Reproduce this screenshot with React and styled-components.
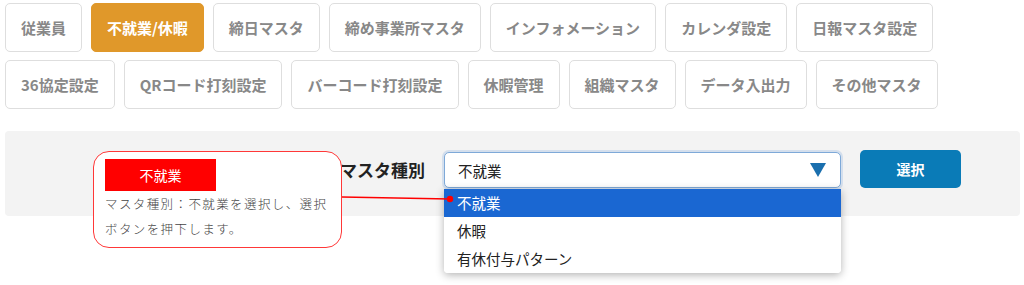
import React from 'react';
import styled, { createGlobalStyle } from 'styled-components';

const GlobalStyle = createGlobalStyle`
  html, body {
    margin: 0;
    padding: 0;
    background: #fff;
    font-family: "Noto Sans CJK JP", "Noto Sans", sans-serif;
  }
`;

const Page = styled.div`
  width: 1024px;
  height: 285px;
  overflow: hidden;
  position: relative;
`;

const TabGrid = styled.div`
  display: flex;
  flex-wrap: wrap;
  gap: 8px 9px;
  padding: 3px 5px 0;
  width: 1014px;
`;

const Tab = styled.button`
  height: 49px;
  padding: 0 15px;
  border: 1px solid ${p => (p.active ? '#e0982a' : '#dedede')};
  border-radius: 5px;
  background: ${p => (p.active ? '#e0982a' : '#fff')};
  color: ${p => (p.active ? '#fff' : '#888')};
  font-family: inherit;
  font-size: 15px;
  font-weight: 700;
  white-space: nowrap;
`;

const Stage = styled.div`
  position: relative;
  margin-top: 22px;
`;

const Panel = styled.div`
  margin: 0 4px 0 5px;
  height: 85px;
  background: #f3f3f3;
  border-radius: 4px;
  display: flex;
  align-items: flex-start;
  padding: 19px 0 0 335px;
  box-sizing: border-box;
`;

const Label = styled.span`
  font-size: 17px;
  font-weight: 700;
  color: #222;
  width: 104px;
  line-height: 40px;
`;

const SelectWrap = styled.div`
  position: relative;
  width: 397px;
  margin-top: 2px;
`;

const SelectBox = styled.div`
  height: 36px;
  box-sizing: border-box;
  border: 1px solid #7ea9d8;
  box-shadow: 0 0 0 2px rgba(120, 165, 220, 0.25);
  border-radius: 5px;
  background: #fff;
  display: flex;
  align-items: center;
  justify-content: space-between;
  padding: 0 14px 0 13px;
  font-size: 14.5px;
  color: #222;
`;

const Options = styled.ul`
  position: absolute;
  top: 37px;
  left: 0;
  right: 0;
  margin: 0;
  padding: 0;
  list-style: none;
  background: #fff;
  border-radius: 0 0 4px 4px;
  box-shadow: 0 2px 8px rgba(0, 0, 0, 0.3);
  overflow: hidden;
  z-index: 2;
`;

const Option = styled.li`
  height: 28px;
  line-height: 28px;
  padding-left: 13px;
  font-size: 14.5px;
  background: ${p => (p.selected ? '#1a67d2' : '#fff')};
  color: ${p => (p.selected ? '#fff' : '#222')};
`;

const Submit = styled.button`
  margin-left: 19px;
  width: 101px;
  height: 38px;
  border: none;
  border-radius: 5px;
  background: #0a7bb7;
  color: #fff;
  font-family: inherit;
  font-size: 14px;
  font-weight: 700;
`;

const Callout = styled.div`
  position: absolute;
  left: 93px;
  top: 20px;
  width: 249px;
  height: 97px;
  box-sizing: border-box;
  border: 1.5px solid #ff3838;
  border-radius: 16px;
  background: #fff;
  padding: 7px 0 0 11px;
  z-index: 3;
`;

const Tag = styled.div`
  width: 111px;
  height: 32px;
  background: #ff0000;
  color: #fff;
  font-size: 14px;
  display: flex;
  align-items: center;
  justify-content: center;
`;

const Note = styled.p`
  margin: 0;
  font-size: 12.5px;
  line-height: 25px;
  letter-spacing: 1.4px;
  color: #444;
  font-weight: 300;
  white-space: nowrap;
`;

const Connector = styled.svg`
  position: absolute;
  left: 0;
  top: 0;
  z-index: 4;
  pointer-events: none;
`;

const tabs = [
  '従業員', '不就業/休暇', '締日マスタ', '締め事業所マスタ', 'インフォメーション', 'カレンダ設定', '日報マスタ設定',
  '36協定設定', 'QRコード打刻設定', 'バーコード打刻設定', '休暇管理', '組織マスタ', 'データ入出力', 'その他マスタ',
];

export default function App() {
  return (
    <Page>
      <GlobalStyle />
      <TabGrid>
        {tabs.map(t => (
          <Tab key={t} active={t === '不就業/休暇'}>{t}</Tab>
        ))}
      </TabGrid>
      <Stage>
        <Panel>
          <Label>マスタ種別</Label>
          <SelectWrap>
            <SelectBox>
              <span>不就業</span>
              <svg width="16" height="14" viewBox="0 0 16 14">
                <path d="M0 0 H16 L8 14 Z" fill="#1a6fae" />
              </svg>
            </SelectBox>
            <Options>
              <Option selected>不就業</Option>
              <Option>休暇</Option>
              <Option>有休付与パターン</Option>
            </Options>
          </SelectWrap>
          <Submit>選択</Submit>
        </Panel>
        <Callout>
          <Tag>不就業</Tag>
          <Note>
            マスタ種別：不就業を選択し、選択
            <br />
            ボタンを押下します。
          </Note>
        </Callout>
        <Connector width="1024" height="153">
          <line x1="342" y1="66" x2="450" y2="68" stroke="#ff0000" strokeWidth="1.5" />
          <circle cx="450" cy="68" r="3.2" fill="#ff0000" />
        </Connector>
      </Stage>
    </Page>
  );
}
